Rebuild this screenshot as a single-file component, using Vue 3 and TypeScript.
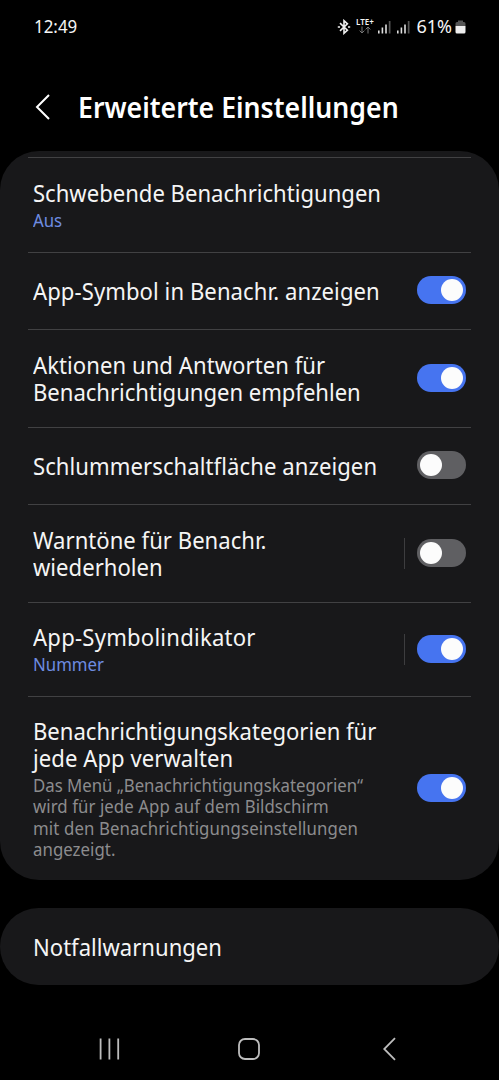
<template>
  <div class="screen">
    <header class="status-bar">
      <span class="clock">12:49</span>
      <div class="status-icons">
        <svg class="bluetooth" width="14" height="16" viewBox="0 0 14 16">
          <path d="M3 4.2 L10.4 11.2 L7 14.3 V1.7 L10.4 4.8 L3 11.8" />
          <path d="M0.8 8 H3 M11 8 H13.2" />
        </svg>
        <div class="lte">
          <span>LTE+</span>
          <svg width="12" height="8" viewBox="0 0 12 8">
            <path d="M3 0.5 V7 M0.6 4.6 L3 7 L5.4 4.6 M9 7.5 V1 M6.6 3.4 L9 1 L11.4 3.4" />
          </svg>
        </div>
        <svg v-for="n in 2" :key="n" class="signal" width="13" height="14" viewBox="0 0 13 14">
          <rect x="0" y="10.5" width="1.6" height="3" />
          <rect x="3.6" y="7.5" width="1.6" height="6" />
          <rect x="7.2" y="4.5" width="1.6" height="9" />
          <rect class="weak" x="10.8" y="1" width="1.7" height="12.5" />
        </svg>
        <span class="percent">61%</span>
        <svg class="battery" width="11" height="14" viewBox="0 0 11 14">
          <path class="empty" d="M3 0.5 H8 V2 H9 Q10.5 2 10.5 3.5 V6 H0.5 V3.5 Q0.5 2 2 2 H3 Z" />
          <path d="M0.5 6 H10.5 V12 Q10.5 13.5 9 13.5 H2 Q0.5 13.5 0.5 12 Z" />
        </svg>
      </div>
    </header>

    <div class="title-bar">
      <svg class="back" width="16" height="28" viewBox="0 0 16 28">
        <path d="M14 2 L2 14 L14 26" />
      </svg>
      <h1>Erweiterte Einstellungen</h1>
    </div>

    <main>
      <section class="card settings">
        <div v-for="row in rows" :key="row.id" class="row" :class="row.id">
          <div class="text">
            <div class="title">
              <span v-for="line in row.title" :key="line.text" :style="{ letterSpacing: line.spacing + 'px' }">{{ line.text }}</span>
            </div>
            <div v-if="row.value" class="value">{{ row.value }}</div>
            <div v-if="row.description" class="description">
              <span v-for="line in row.description" :key="line.text" :style="{ letterSpacing: line.spacing + 'px' }">{{ line.text }}</span>
            </div>
          </div>
          <div v-if="row.separated" class="separator"></div>
          <button
            v-if="row.enabled !== undefined"
            class="toggle"
            :class="{ on: row.enabled }"
            @click="row.enabled = !row.enabled"
          ></button>
        </div>
      </section>

      <section class="card emergency">
        <div class="text">
          <div class="title"><span>Notfallwarnungen</span></div>
        </div>
      </section>
    </main>

    <nav class="nav-bar">
      <svg width="22" height="24" viewBox="0 0 22 24">
        <path d="M2.6 1.5 V22.5 M11.4 1.5 V22.5 M20.2 1.5 V22.5" />
      </svg>
      <svg class="home" width="24" height="24" viewBox="0 0 24 24">
        <rect x="2" y="2" width="20" height="20" rx="6" />
      </svg>
      <svg width="14" height="24" viewBox="0 0 14 24">
        <path d="M12 1.2 L1.2 12 L12 22.8" />
      </svg>
    </nav>
  </div>
</template>

<script setup lang="ts">
import { ref } from 'vue'

interface Line {
  text: string
  spacing: number
}

interface Row {
  id: string
  title: Line[]
  value?: string
  description?: Line[]
  separated?: boolean
  enabled?: boolean
}

const rows = ref<Row[]>([
  {
    id: 'floating',
    title: [{ text: 'Schwebende Benachrichtigungen', spacing: 0 }],
    value: 'Aus'
  },
  {
    id: 'app-icon',
    title: [{ text: 'App-Symbol in Benachr. anzeigen', spacing: 0.08 }],
    enabled: true
  },
  {
    id: 'actions',
    title: [
      { text: 'Aktionen und Antworten für', spacing: 0.06 },
      { text: 'Benachrichtigungen empfehlen', spacing: -0.02 }
    ],
    enabled: true
  },
  {
    id: 'snooze',
    title: [{ text: 'Schlummerschaltfläche anzeigen', spacing: 0.08 }],
    enabled: false
  },
  {
    id: 'repeat',
    title: [
      { text: 'Warntöne für Benachr.', spacing: 0.02 },
      { text: 'wiederholen', spacing: 0.02 }
    ],
    separated: true,
    enabled: false
  },
  {
    id: 'badge',
    title: [{ text: 'App-Symbolindikator', spacing: 0.24 }],
    value: 'Nummer',
    separated: true,
    enabled: true
  },
  {
    id: 'categories',
    title: [
      { text: 'Benachrichtigungskategorien für', spacing: 0 },
      { text: 'jede App verwalten', spacing: 0.06 }
    ],
    description: [
      { text: 'Das Menü „Benachrichtigungskategorien“', spacing: -0.02 },
      { text: 'wird für jede App auf dem Bildschirm', spacing: 0.07 },
      { text: 'mit den Benachrichtigungseinstellungen', spacing: 0.12 },
      { text: 'angezeigt.', spacing: 0.04 }
    ],
    enabled: true
  }
])
</script>

<style>
body {
  margin: 0;
  background: #000;
}
</style>

<style scoped>
.screen {
  width: 499px;
  height: 1080px;
  overflow: hidden;
  display: flex;
  flex-direction: column;
  background: #000;
  color: #f5f5f5;
  font-family: "Noto Sans", "Open Sans", sans-serif;
}

svg {
  display: block;
  flex: none;
  fill: none;
}

.status-bar {
  height: 53px;
  box-sizing: border-box;
  padding: 0 33px 0 34px;
  display: flex;
  align-items: center;
  justify-content: space-between;
}

.clock {
  margin-bottom: 1px;
  font-size: 18px;
  transform: scaleX(0.94);
  transform-origin: left;
}

.status-icons {
  display: flex;
  align-items: center;
}

.bluetooth {
  margin-right: 4px;
  stroke: #eee;
  stroke-width: 1.6;
}

.lte {
  width: 19px;
  margin: 0 4px 2px 0;
  display: flex;
  flex-direction: column;
  align-items: center;
  font-size: 8px;
  font-weight: 600;
  line-height: 9px;
}

.lte svg {
  stroke: #777;
}

.signal {
  margin-right: 6px;
  fill: #ddd;
}

.weak {
  fill: #555;
}

.percent {
  margin: 0 3px 1px 0;
  font-size: 18px;
}

.battery {
  fill: #eee;
}

.empty {
  fill: #555;
}

.title-bar {
  height: 98px;
  box-sizing: border-box;
  padding: 0 0 0 35px;
  display: flex;
  align-items: flex-start;
}

.back {
  margin: 40px 27px 0 0;
  stroke: #fff;
  stroke-width: 2;
}

h1 {
  margin: 34px 0 0;
  font-size: 29px;
  line-height: 40px;
  font-weight: 600;
  color: #fff;
  white-space: nowrap;
  transform: scaleX(0.92);
  transform-origin: left;
}

main {
  flex: 1;
}

.card {
  box-sizing: border-box;
  background: #18181a;
  border-radius: 39px;
}

.settings {
  height: 729px;
  padding: 6px 28px 0;
}

.row {
  box-sizing: border-box;
  border-top: 1.5px solid #414143;
  padding: 0 5px;
  display: flex;
  align-items: center;
}

.floating {
  height: 94.5px;
}

.app-icon,
.snooze {
  height: 77.5px;
}

.actions,
.repeat {
  height: 97.5px;
}

.badge {
  height: 94px;
}

.categories {
  height: 184px;
}

.text {
  flex: 1;
  padding-top: 2px;
  transform: scaleX(0.96);
  transform-origin: left;
}

.title {
  font-size: 23px;
  line-height: 27px;
}

.title span,
.description span {
  display: block;
  width: max-content;
}

.value {
  margin-top: 1px;
  font-size: 17.5px;
  line-height: 25px;
  color: #6e8ce0;
}

.description {
  margin-top: 3px;
  font-size: 17.5px;
  line-height: 21.3px;
  color: #8c8c8e;
}

.floating .text,
.badge .text {
  padding-top: 3px;
}

.separator {
  width: 1px;
  height: 31px;
  margin-right: 12px;
  background: #3d3d3f;
}

.toggle {
  width: 49px;
  height: 28px;
  margin-bottom: 1px;
  padding: 3px;
  border: none;
  border-radius: 14px;
  background: #5f5f62;
  display: flex;
  align-items: center;
  flex: none;
  cursor: pointer;
}

.toggle::before {
  content: "";
  width: 22px;
  height: 22px;
  border-radius: 50%;
  background: #fcfcfc;
}

.toggle.on {
  background: #4674f0;
  justify-content: flex-end;
}

.emergency {
  height: 77px;
  margin-top: 28px;
  padding: 0 33px;
  display: flex;
  align-items: center;
}

.nav-bar {
  height: 63px;
  box-sizing: border-box;
  padding: 0 102px 0 98px;
  display: flex;
  align-items: center;
  justify-content: space-between;
}

.nav-bar svg {
  stroke: #bdbdbd;
  stroke-width: 1.8;
}

.nav-bar .home {
  margin-right: 6px;
}
</style>
